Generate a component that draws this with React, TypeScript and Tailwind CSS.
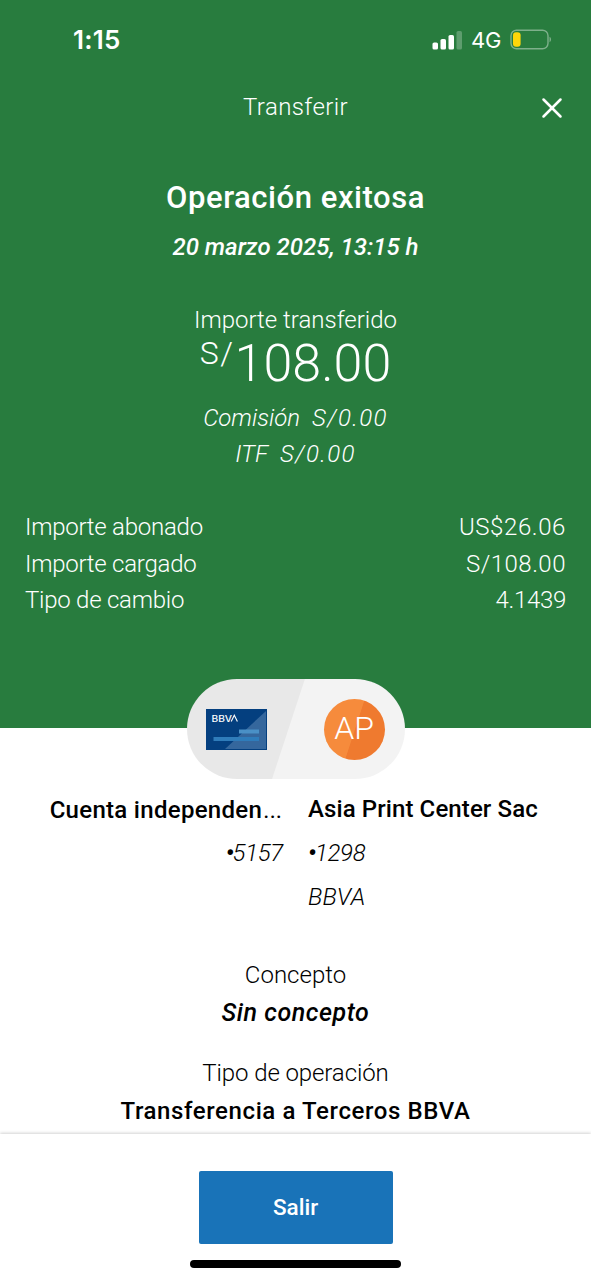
import { X } from 'lucide-react';

const amounts = [
	{ label: 'Importe abonado', value: 'US$26.06', spacing: 'tracking-[0.6px]' },
	{ label: 'Importe cargado', value: 'S/108.00', spacing: 'tracking-[0.5px]' },
	{ label: 'Tipo de cambio', value: '4.1439', spacing: 'tracking-[-0.3px]' },
];

function StatusBar() {
	return (
		<div className="flex h-[79px] items-center justify-between pr-[39px] pl-[73px] font-['Inter',sans-serif] text-white">
			<span className="text-[26px] leading-none font-semibold tracking-[0.2px]">1:15</span>
			<div className="flex items-center">
				<svg width="31" height="20" viewBox="0 0 31 20" fill="#fff">
					<rect x="0.5" y="12.5" width="5.5" height="7" rx="1.6" />
					<rect x="8.5" y="9" width="5.5" height="10.5" rx="1.6" />
					<rect x="16.5" y="5" width="5.5" height="14.5" rx="1.6" />
					<rect x="24.5" y="1" width="5.5" height="18.5" rx="1.6" opacity="0.25" />
				</svg>
				<span className="mt-px ml-2 text-[22px] leading-none font-normal tracking-[-0.3px]">4G</span>
				<svg className="ml-[9px]" width="42" height="22" viewBox="0 0 42 22" fill="none">
					<rect x="1" y="1.2" width="37" height="18.6" rx="5.5" stroke="#fff" strokeOpacity="0.4" strokeWidth="1.4" />
					<rect x="3" y="3.3" width="7.6" height="14.4" rx="3" fill="#ffd60a" />
					<path d="M39.6 7.8c1.6.7 1.6 4.7 0 5.4z" fill="#fff" fillOpacity="0.5" />
				</svg>
			</div>
		</div>
	);
}

function AccountCard() {
	return (
		<svg width="61" height="41" viewBox="0 0 61 41">
			<rect width="61" height="41" fill="#043f7f" />
			<path d="M60 2v38H19z" fill="#35679d" />
			<rect x="33" y="20.5" width="20" height="4" fill="#4a90c6" />
			<rect x="7.5" y="28" width="45.5" height="4" fill="#2f7cba" />
			<text
				x="5.5"
				y="12.5"
				fill="#fff"
				fontSize="9"
				fontWeight="500"
				fontFamily="Inter"
				textLength="20.5"
				lengthAdjust="spacingAndGlyphs"
			>
				BBV
			</text>
			<path d="M25.2 12.5l3.1-6.2 3.1 6.2" fill="none" stroke="#fff" strokeWidth="1.1" />
		</svg>
	);
}

function Fee({ label, value }: { label: string; value: string }) {
	return (
		<p className="flex justify-center gap-3 leading-9 italic">
			<span>{label}</span>
			<span className="tracking-[1.4px]">{value}</span>
		</p>
	);
}

export default function App() {
	return (
		<div className="flex h-[1280px] w-[591px] flex-col overflow-hidden bg-white font-['Roboto',sans-serif] text-2xl font-light text-black">
			<section className="h-[728px] shrink-0 bg-[#287c3e] text-white">
				<StatusBar />
				<header className="mt-[10px] grid h-9 grid-cols-[60px_1fr_60px] items-center text-center leading-9">
					<h1 className="col-start-2 tracking-[0.4px]">Transferir</h1>
					<button className="mt-0.5 ml-1">
						<X size={34} strokeWidth={1.8} />
					</button>
				</header>

				<div className="mt-[53px] text-center">
					<h2 className="text-[31px] leading-10 font-medium tracking-[0.55px]">Operación exitosa</h2>
					<p className="mt-[11px] leading-9 font-medium italic">20 marzo 2025, 13:15 h</p>
					<p className="mt-[37px] leading-9">Importe transferido</p>
					<div className="mt-px flex h-12 justify-center">
						<span className="text-[32px] leading-7 tracking-[1.6px]">S/</span>
						<span className="text-[52px] leading-[50px]">108.00</span>
					</div>
					<div className="mt-[13px]">
						<Fee label="Comisión" value="S/0.00" />
						<Fee label="ITF" value="S/0.00" />
					</div>
				</div>

				<dl className="mt-[37px] px-[25px] pt-[0.3px] leading-[36.4px]">
					{amounts.map((row) => (
						<div key={row.label} className="flex justify-between">
							<dt className="tracking-[-0.25px]">{row.label}</dt>
							<dd className={row.spacing}>{row.value}</dd>
						</div>
					))}
				</dl>
			</section>

			<div className="relative mx-auto -mt-[49px] flex h-[100px] w-[218px] shrink-0 items-center justify-between rounded-full bg-[linear-gradient(108.2deg,#e8e8e8_46.8%,#f3f3f3_47.2%)] pr-5 pl-[19px]">
				<AccountCard />
				<div className="flex size-[61px] items-center justify-center rounded-full bg-[linear-gradient(108deg,#f68b3c_50%,#ef7a2f_51%)] pb-[3px] text-[32px] leading-none text-white">
					AP
				</div>
			</div>

			<div className="mt-3 grid shrink-0 grid-cols-2 gap-x-[25px] px-[25px]">
				<div className="text-right">
					<p className="h-9 leading-[37px] font-medium tracking-[0.3px]">
						Cuenta independen<span className="text-[32px] leading-none font-light">…</span>
					</p>
					<p className="mt-1 leading-[44px] italic">
						<span className="font-bold tracking-[-1.5px]">•</span>
						<span className="tracking-[-0.3px]">5157</span>
					</p>
				</div>
				<div>
					<p className="h-9 leading-[37px] font-medium tracking-[0.1px]">Asia Print Center Sac</p>
					<p className="mt-1 leading-[44px] italic">
						<span className="font-bold tracking-[-1.5px]">•</span>
						<span className="tracking-[-0.3px]">1298</span>
					</p>
					<p className="leading-[44px] tracking-[0.3px] italic">BBVA</p>
				</div>
			</div>

			<div className="mt-[37px] text-center leading-[38px]">
				<p>Concepto</p>
				<p className="text-[25px] font-medium tracking-[0.55px] italic">Sin concepto</p>
				<p className="mt-[22px] tracking-[-0.1px]">Tipo de operación</p>
				<p className="font-medium tracking-[0.6px]">Transferencia a Terceros BBVA</p>
			</div>

			<footer className="relative mt-auto flex h-[146px] shrink-0 flex-col items-center bg-white pt-[37px] shadow-[0_-1px_3px_rgba(0,0,0,0.18)]">
				<button className="h-[73px] w-[194px] rounded-[2px] bg-[#1973b8] pb-0.5 text-[22.5px] font-medium text-white">
					Salir
				</button>
				<div className="mt-4 h-2 w-[211px] rounded-full bg-black" />
			</footer>
		</div>
	);
}
